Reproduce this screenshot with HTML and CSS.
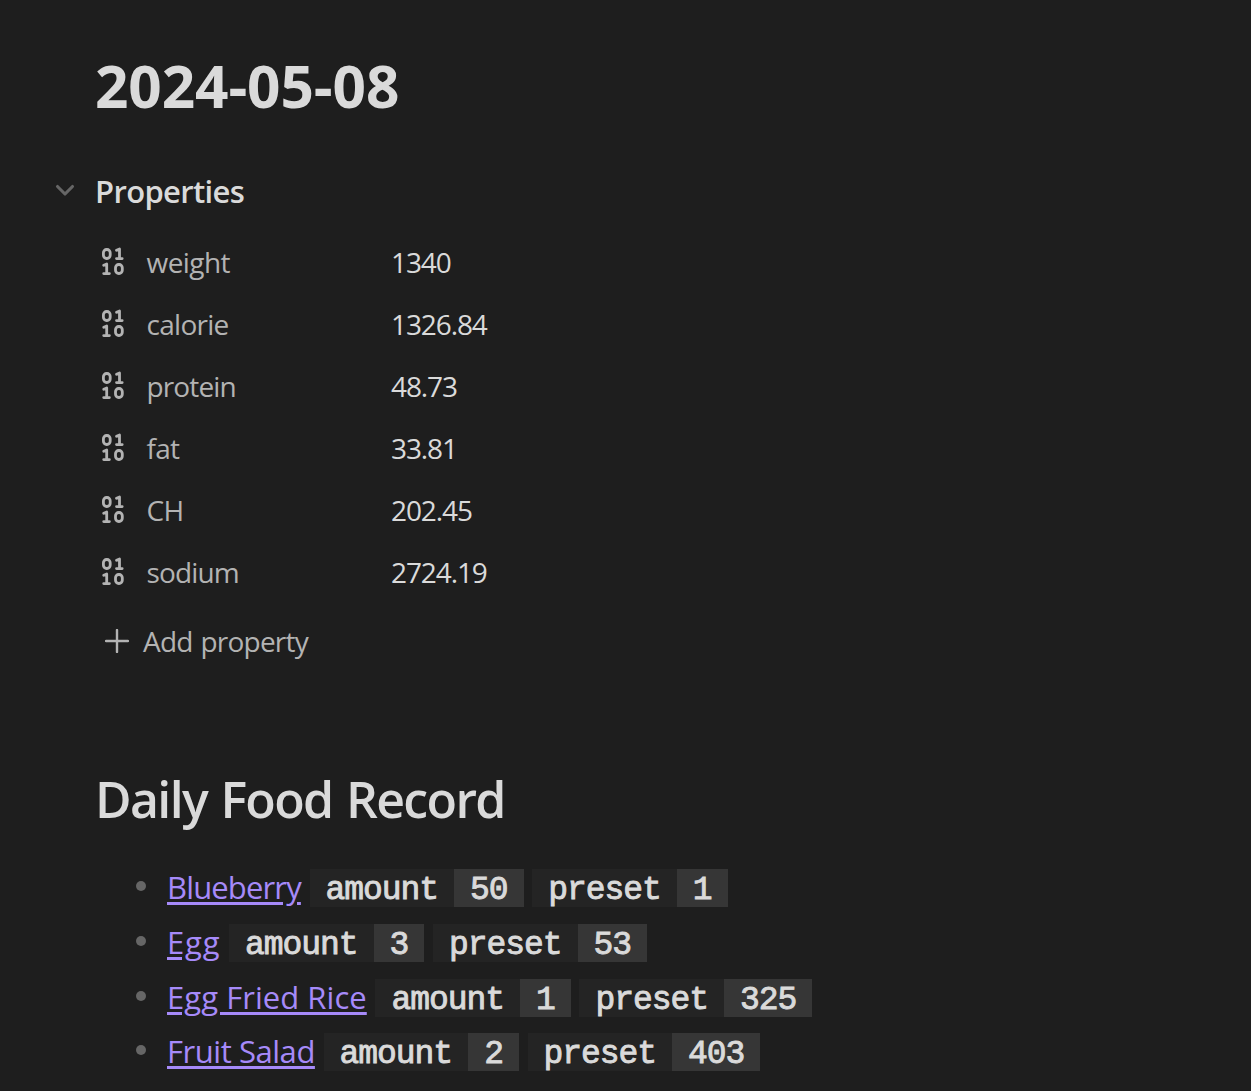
FILE: index.html
```html
<!DOCTYPE html>
<html lang="en">
<head>
<meta charset="utf-8">
<title>2024-05-08</title>
<link rel="stylesheet" href="styles.css">
</head>
<body>
<svg class="sprite" aria-hidden="true">
  <symbol id="binary" viewBox="0 0 30 30"><rect x="5.400" y="2.500" width="6.800" height="9" rx="3.200"/><path d="M18.500 3.200l3-1.200v9.600M18.500 11.600h5.700M5.700 18.200l3-1.200v9.600M5.700 26.600h5.700"/><rect x="17.500" y="17.500" width="6.800" height="9" rx="3.200"/></symbol>
</svg>
<main class="note">
  <h1 class="title">2024-05-08</h1>
  <section class="properties">
    <div class="heading">
      <svg class="chevron" viewBox="0 0 18 11"><path d="M1.500 1.500 9 9l7.500-7.500"/></svg>
      <h2 class="subtitle">Properties</h2>
    </div>
    <dl class="rows">
      <div class="row"><svg class="icon"><use href="#binary"/></svg><dt class="weight">weight</dt><dd>1340</dd></div>
      <div class="row"><svg class="icon"><use href="#binary"/></svg><dt class="calorie">calorie</dt><dd>1326.84</dd></div>
      <div class="row"><svg class="icon"><use href="#binary"/></svg><dt class="protein">protein</dt><dd>48.73</dd></div>
      <div class="row"><svg class="icon"><use href="#binary"/></svg><dt class="fat">fat</dt><dd>33.81</dd></div>
      <div class="row"><svg class="icon"><use href="#binary"/></svg><dt class="ch">CH</dt><dd>202.45</dd></div>
      <div class="row"><svg class="icon"><use href="#binary"/></svg><dt class="sodium">sodium</dt><dd>2724.19</dd></div>
    </dl>
    <div class="add"><svg class="plus" viewBox="0 0 24 24"><path d="M1 12h22M12 1v22"/></svg><span>Add property</span></div>
  </section>
  <h2 class="section-title">Daily Food Record</h2>
  <ul class="foods">
    <li><a class="blueberry">Blueberry</a><span class="field"><b>amount</b><i>50</i></span><span class="field"><b>preset</b><i>1</i></span></li>
    <li><a class="egg">Egg</a><span class="field"><b>amount</b><i>3</i></span><span class="field"><b>preset</b><i>53</i></span></li>
    <li><a class="rice">Egg Fried Rice</a><span class="field"><b>amount</b><i>1</i></span><span class="field"><b>preset</b><i>325</i></span></li>
    <li><a class="salad">Fruit Salad</a><span class="field"><b>amount</b><i>2</i></span><span class="field"><b>preset</b><i>403</i></span></li>
  </ul>
</main>
</body>
</html>
```
FILE: styles.css
```css
* { box-sizing: border-box; }
body { margin: 0; background: #1e1e1e; color: #dadada; font-family: "Open Sans", "Noto Sans", sans-serif; }
h1, h2, dl, dd, ul { margin: 0; padding: 0; }
.sprite { display: none; }
.note { width: 1251px; height: 1091px; padding: 47px 95px 0; overflow: hidden; }
.title { height: 78px; font-size: 58.500px; line-height: 77px; font-weight: 700; letter-spacing: -0.1px; }
.properties { padding-top: 42px; }
.heading { display: flex; align-items: center; height: 48px; margin-left: -39px; }
.chevron { width: 18px; height: 11px; margin: -2px 21px 0 0; overflow: visible; fill: none; stroke: #666; stroke-width: 3.1; stroke-linecap: round; stroke-linejoin: round; }
.subtitle { font-size: 31px; font-weight: 600; line-height: 48px; letter-spacing: -0.65px; }
.rows { padding-top: 16px; }
.row { display: flex; align-items: center; height: 62px; font-size: 28px; line-height: 62px; }
.icon { width: 30px; height: 30px; margin: -1px 18px 0 3px; fill: none; stroke: #b3b3b3; stroke-width: 2.8; stroke-linecap: round; stroke-linejoin: round; }
dt { width: 244px; padding-left: 0.6px; color: #b3b3b3; letter-spacing: -0.75px; }
.weight { letter-spacing: -0.6px; }
.protein, .sodium { letter-spacing: -0.9px; }
dd { padding-left: 1px; letter-spacing: -1.1px; }
.add { display: flex; align-items: center; height: 62px; margin-top: 7px; padding-left: 10px; color: #b3b3b3; font-size: 28px; letter-spacing: -0.8px; word-spacing: 1.500px; }
.plus { width: 24px; height: 24px; margin: 0 14px 0 0; fill: none; stroke: #b3b3b3; stroke-width: 2.4; stroke-linecap: round; }
.section-title { margin-top: 91px; height: 72px; font-size: 50px; line-height: 72px; font-weight: 600; letter-spacing: -1.65px; word-spacing: 2px; }
.foods { padding-top: 25.900px; list-style: none; }
.foods li { display: flex; align-items: center; height: 54.700px; padding-left: 41px; font-size: 31px; }
.foods li::before { content: ""; width: 10px; height: 10px; margin: -4px 21px 0 0; border-radius: 50%; background: #666; }
a { margin-top: -2px; color: #a68af9; text-decoration: underline; text-decoration-thickness: 3px; text-underline-offset: 3px; }
.blueberry { letter-spacing: -0.85px; }
.egg { letter-spacing: 0.8px; }
.rice { letter-spacing: 0.05px; }
.salad { letter-spacing: -0.45px; }
.field { display: flex; height: 38px; margin-left: 8.700px; font: 33px/43px "Liberation Mono", monospace; letter-spacing: -1.05px; -webkit-text-stroke: 0.9px #dadada; }
.field b, .field i { height: 38px; padding: 0 16px; font-style: normal; font-weight: 400; background: #242424; }
.field i { background: #363636; }
```
